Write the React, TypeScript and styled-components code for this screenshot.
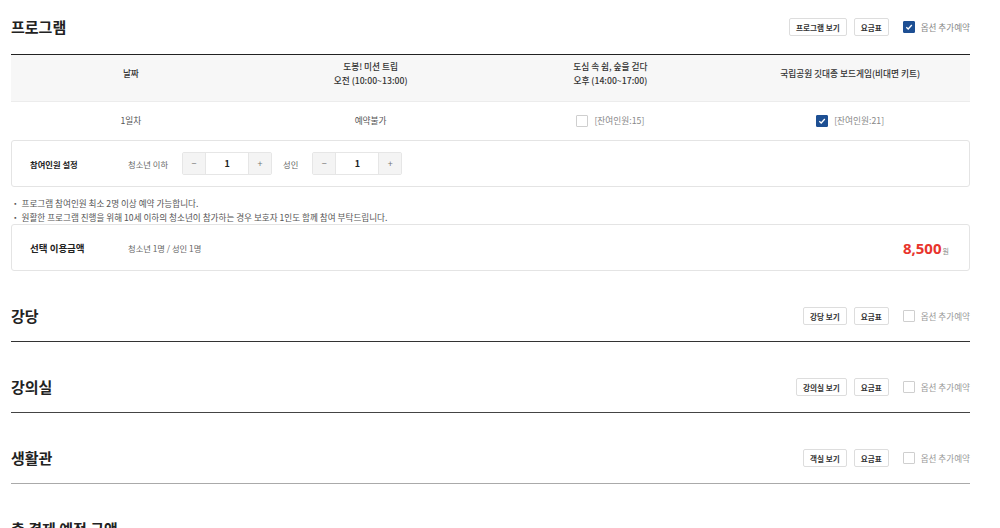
import React from "react";
import styled, { createGlobalStyle } from "styled-components";

const GlobalStyle = createGlobalStyle`
  html, body {
    margin: 0;
    padding: 0;
    background: #fff;
  }
  body {
    font-family: "Noto Sans CJK KR", "Noto Sans", sans-serif;
    color: #222;
  }
  * {
    box-sizing: border-box;
  }
`;

const Page = styled.div`
  width: 959px;
  margin-left: 11px;
`;

const SectionHead = styled.div<{ $tall?: boolean; $line?: string }>`
  height: ${(p) => (p.$tall ? "71px" : "55px")};
  display: flex;
  align-items: flex-end;
  justify-content: space-between;
  padding-bottom: ${(p) => (p.$tall ? "16px" : "18px")};
  border-bottom: 1px solid ${(p) => p.$line || "#222"};
`;

const Title = styled.h2`
  margin: 0;
  font-size: 15px;
  font-weight: 700;
  line-height: 18px;
  color: #222;
`;

const Tools = styled.div`
  display: flex;
  align-items: center;
  gap: 7px;
`;

const SmallButton = styled.button`
  height: 18px;
  padding: 0 6px;
  border: 1px solid #ddd;
  border-radius: 2px;
  background: #fff;
  font-family: inherit;
  font-size: 7.6px;
  font-weight: 700;
  color: #333;
  cursor: pointer;
`;

const CheckLabel = styled.label<{ $muted?: boolean }>`
  display: flex;
  align-items: center;
  gap: 6px;
  font-size: 8.6px;
  color: ${(p) => (p.$muted ? "#999" : "#888")};
  margin-left: 7px;
`;

const Box = styled.span<{ $checked?: boolean }>`
  width: 12px;
  height: 12px;
  display: inline-flex;
  align-items: center;
  justify-content: center;
  border: 1px solid ${(p) => (p.$checked ? "#1d4f93" : "#cfcfcf")};
  background: ${(p) => (p.$checked ? "#1d4f93" : "#fff")};
  border-radius: 1px;
`;

const Check = ({ checked }: { checked?: boolean }) => (
  <Box $checked={checked}>
    {checked && (
      <svg width="8" height="8" viewBox="0 0 8 8">
        <path d="M1.3 4.2 L3.2 6 L6.8 2" fill="none" stroke="#fff" strokeWidth="1.3" />
      </svg>
    )}
  </Box>
);

const Grid = styled.div<{ $head?: boolean }>`
  display: grid;
  grid-template-columns: repeat(4, 1fr);
  align-items: center;
  height: ${(p) => (p.$head ? "47px" : "38px")};
  padding-bottom: ${(p) => (p.$head ? "8px" : "0")};
  background: ${(p) => (p.$head ? "#f7f7f7" : "#fff")};
  border-bottom: ${(p) => (p.$head ? "1px solid #ececec" : "none")};
`;

const Cell = styled.div<{ $head?: boolean; $muted?: boolean }>`
  display: flex;
  align-items: center;
  justify-content: center;
  gap: 6px;
  text-align: center;
  font-size: 8.7px;
  line-height: 14px;
  font-weight: ${(p) => (p.$head ? 500 : 400)};
  color: ${(p) => (p.$head ? "#333" : p.$muted ? "#888" : "#555")};
`;

const Panel = styled.div`
  height: 47px;
  display: flex;
  align-items: center;
  padding-left: 18px;
  padding-right: 20px;
  border: 1px solid #e4e4e4;
  border-radius: 3px;
`;

const PanelLabel = styled.div<{ $size?: number }>`
  width: 98px;
  font-size: ${(p) => p.$size || 8.3}px;
  font-weight: 700;
  color: #222;
`;

const Muted = styled.span`
  font-size: 8.3px;
  color: #666;
`;

const Stepper = styled.div`
  display: flex;
  height: 23px;
  margin: 0 11px 0 14px;
  border: 1px solid #e6e6e6;
  border-radius: 2px;
`;

const StepBtn = styled.button`
  width: 22px;
  border: none;
  background: #f4f4f4;
  color: #777;
  font-size: 9px;
  padding: 0;
  font-family: inherit;
`;

const StepValue = styled.div`
  width: 44px;
  display: flex;
  align-items: center;
  justify-content: center;
  border-left: 1px solid #e6e6e6;
  border-right: 1px solid #e6e6e6;
  font-size: 9px;
  font-weight: 700;
  color: #222;
`;

const Notes = styled.ul`
  margin: 9px 0 0;
  padding: 0;
  list-style: none;
  font-size: 8.6px;
  line-height: 14px;
  color: #555;
`;

const Price = styled.div`
  margin-left: auto;
  display: flex;
  align-items: baseline;
  gap: 1px;
`;

const Amount = styled.span`
  font-family: "Noto Sans", "Noto Sans CJK KR", sans-serif;
  font-size: 15px;
  font-weight: 700;
  color: #e8342c;
`;

const Unit = styled.span`
  font-size: 7px;
  color: #888;
`;

type Sec = { title: string; view: string; line?: string };

const sections: Sec[] = [
  { title: "강당", view: "강당 보기", line: "#333" },
  { title: "강의실", view: "강의실 보기", line: "#444" },
  { title: "생활관", view: "객실 보기", line: "#aaa" },
];

const Counter = () => (
  <Stepper>
    <StepBtn>−</StepBtn>
    <StepValue>1</StepValue>
    <StepBtn>+</StepBtn>
  </Stepper>
);

export default function App() {
  return (
    <Page>
      <GlobalStyle />
      <SectionHead>
        <Title>프로그램</Title>
        <Tools>
          <SmallButton>프로그램 보기</SmallButton>
          <SmallButton>요금표</SmallButton>
          <CheckLabel>
            <Check checked />
            옵션 추가예약
          </CheckLabel>
        </Tools>
      </SectionHead>

      <Grid $head>
        <Cell $head>날짜</Cell>
        <Cell $head>
          도봉! 미션 트립
          <br />
          오전 (10:00~13:00)
        </Cell>
        <Cell $head>
          도심 속 쉼, 숲을 걷다
          <br />
          오후 (14:00~17:00)
        </Cell>
        <Cell $head>국립공원 깃대종 보드게임(비대면 키트)</Cell>
      </Grid>
      <Grid>
        <Cell>1일차</Cell>
        <Cell>예약불가</Cell>
        <Cell $muted>
          <Check />
          [잔여인원:15]
        </Cell>
        <Cell $muted>
          <Check checked />
          [잔여인원:21]
        </Cell>
      </Grid>

      <Panel>
        <PanelLabel>참여인원 설정</PanelLabel>
        <Muted>청소년 이하</Muted>
        <Counter />
        <Muted>성인</Muted>
        <Counter />
      </Panel>

      <Notes>
        <li>・ 프로그램 참여인원 최소 2명 이상 예약 가능합니다.</li>
        <li>・ 원활한 프로그램 진행을 위해 10세 이하의 청소년이 참가하는 경우 보호자 1인도 함께 참여 부탁드립니다.</li>
      </Notes>

      <Panel>
        <PanelLabel $size={9.5}>선택 이용금액</PanelLabel>
        <Muted>청소년 1명 / 성인 1명</Muted>
        <Price>
          <Amount>8,500</Amount>
          <Unit>원</Unit>
        </Price>
      </Panel>

      {sections.map((s) => (
        <SectionHead key={s.title} $tall $line={s.line}>
          <Title>{s.title}</Title>
          <Tools>
            <SmallButton>{s.view}</SmallButton>
            <SmallButton>요금표</SmallButton>
            <CheckLabel $muted>
              <Check />
              옵션 추가예약
            </CheckLabel>
          </Tools>
        </SectionHead>
      ))}

      <SectionHead $tall $line="transparent">
        <Title>총 결제 예정 금액</Title>
      </SectionHead>
    </Page>
  );
}
